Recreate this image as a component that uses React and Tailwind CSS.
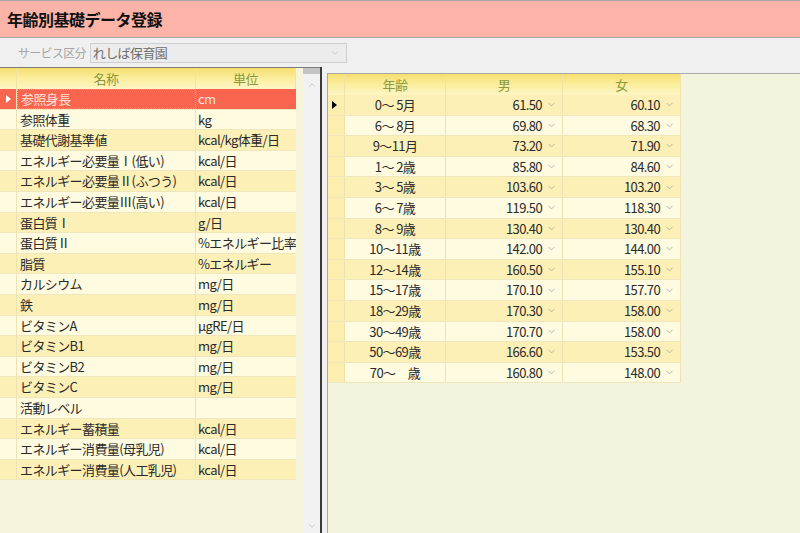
import { ChevronDown, ChevronUp } from 'lucide-react'

const items = [
  ['参照身長', 'cm'],
  ['参照体重', 'kg'],
  ['基礎代謝基準値', 'kcal/kg体重/日'],
  ['エネルギー必要量Ⅰ(低い)', 'kcal/日'],
  ['エネルギー必要量Ⅱ(ふつう)', 'kcal/日'],
  ['エネルギー必要量Ⅲ(高い)', 'kcal/日'],
  ['蛋白質Ⅰ', 'g/日'],
  ['蛋白質Ⅱ', '%エネルギー比率'],
  ['脂質', '%エネルギー'],
  ['カルシウム', 'mg/日'],
  ['鉄', 'mg/日'],
  ['ビタミンA', 'μgRE/日'],
  ['ビタミンB1', 'mg/日'],
  ['ビタミンB2', 'mg/日'],
  ['ビタミンC', 'mg/日'],
  ['活動レベル', ''],
  ['エネルギー蓄積量', 'kcal/日'],
  ['エネルギー消費量(母乳児)', 'kcal/日'],
  ['エネルギー消費量(人工乳児)', 'kcal/日'],
]

const ages = [
  ['0～ 5月', '61.50', '60.10'],
  ['6～ 8月', '69.80', '68.30'],
  ['9～11月', '73.20', '71.90'],
  ['1～ 2歳', '85.80', '84.60'],
  ['3～ 5歳', '103.60', '103.20'],
  ['6～ 7歳', '119.50', '118.30'],
  ['8～ 9歳', '130.40', '130.40'],
  ['10～11歳', '142.00', '144.00'],
  ['12～14歳', '160.50', '155.10'],
  ['15～17歳', '170.10', '157.70'],
  ['18～29歳', '170.30', '158.00'],
  ['30～49歳', '170.70', '158.00'],
  ['50～69歳', '166.60', '153.50'],
  ['70～　歳', '160.80', '148.00'],
]

const font = { fontFamily: '"Noto Sans CJK JP", "Noto Sans", sans-serif' }

function Arrow({ className }) {
  return (
    <svg width="5" height="8" viewBox="0 0 5 8" className={className}>
      <path d="M0 0 L5 4 L0 8 Z" fill="currentColor" />
    </svg>
  )
}

function Head({ children, className = '' }) {
  return (
    <div className={`h-full flex items-center justify-center border-r border-[#efe3a6] bg-gradient-to-b from-[#f6df6e] via-[#fbee9e] to-[#fdf5c4] text-[#8a9a3a] text-[13px] ${className}`}>
      {children}
    </div>
  )
}

function NumCell({ v, w }) {
  return (
    <div className={`${w} h-full flex items-center justify-end gap-[4px] pr-[5px] border-r border-[#ece2b2]`}>
      <span>{v}</span>
      <ChevronDown size={11} strokeWidth={1.6} className="text-[#a0a0a0]" />
    </div>
  )
}

export default function App() {
  return (
    <div className="w-[800px] h-[533px] flex flex-col overflow-hidden bg-[#f0f0f0] text-[#2a2a2a]" style={font}>
      <div className="h-[38px] shrink-0 border-t border-b border-[#a8a8a8] bg-[#fdb4a8] flex items-center pl-[7px]">
        <span className="text-[16px] font-bold tracking-[-0.5px] text-[#111]">年齢別基礎データ登録</span>
      </div>

      <div className="h-[29px] shrink-0 flex items-center pl-[18px] gap-[4px]">
        <span className="text-[12px] tracking-[-0.7px] text-[#a6a6a6]">サービス区分</span>
        <div className="w-[257px] h-[20px] border border-[#cfcfcf] bg-[#ececec] flex items-center justify-between pl-[2px] pr-[6px]">
          <span className="text-[13px] tracking-[-0.6px] text-[#6e6e6e]">れしば保育園</span>
          <ChevronDown size={10} strokeWidth={1.5} className="text-[#b0b0b0]" />
        </div>
      </div>

      <div className="flex-1 flex min-h-0 tracking-[-0.6px]">
        {/* left list */}
        <div className="w-[320px] flex border-t border-[#7a7a7a] bg-[#f6f5dc]">
          <div className="w-[303px] flex flex-col">
            <div className="h-[21px] flex w-[296px]">
              <Head className="w-[17px]" />
              <Head className="w-[179px]">名称</Head>
              <Head className="w-[100px]">単位</Head>
            </div>
            {items.map(([n, u], i) => {
              const sel = i === 0
              const bg = sel ? 'bg-[#f9654f] text-[#ffe2dc]' : i % 2 === 0 ? 'bg-[#fdf0b6]' : 'bg-[#fefbe1]'
              return (
                <div key={n} className={`h-[20.6px] w-[296px] flex text-[13px] whitespace-nowrap border-b border-[#efe6bb] ${bg}`}>
                  <div className="w-[17px] h-full flex items-center justify-center border-r border-[#ece2b2]">
                    {sel && <Arrow className="text-white" />}
                  </div>
                  <div className={`w-[179px] h-full flex items-center pl-[3px] overflow-hidden ${sel ? 'border border-dotted border-[#ffffff66]' : 'border-r border-[#ece2b2]'}`}>{n}</div>
                  <div className="w-[100px] h-full flex items-center pl-[2px] overflow-hidden">{u}</div>
                </div>
              )
            })}
          </div>
          <div className="w-[17px] bg-[#f2f2f2] flex flex-col items-center">
            <div className="w-full h-[6px] bg-[#c4c4c4]" />
            <ChevronUp size={10} strokeWidth={1.5} className="text-[#a8a8a8] mt-[6px]" />
            <div className="flex-1" />
            <ChevronDown size={10} strokeWidth={1.5} className="text-[#a8a8a8] mb-[2px]" />
          </div>
        </div>
        <div className="w-[2px] bg-[#3a3a3a]" />

        {/* right table */}
        <div className="flex-1 pt-[6px] pl-[5px]">
          <div className="h-full border-t border-l border-[#a8a8a8] bg-[#f3f4dd]">
            <div className="h-[21px] flex w-[353px]">
              <Head className="w-[17px]" />
              <Head className="w-[101px]">年齢</Head>
              <Head className="w-[117px]">男</Head>
              <Head className="w-[118px]">女</Head>
            </div>
            {ages.map(([a, m, f], i) => (
              <div key={a} className={`h-[20.6px] w-[353px] flex text-[13px] whitespace-nowrap border-b border-[#efe6bb] ${i % 2 === 0 ? 'bg-[#fdf0b6]' : 'bg-[#fefbe1]'}`}>
                <div className="w-[17px] h-full flex items-center pl-[4px] bg-[#fbeeae] border-r border-[#ece2b2]">
                  {i === 0 && <Arrow className="text-black" />}
                </div>
                <div className="w-[101px] h-full flex items-center justify-center border-r border-[#ece2b2]">{a}</div>
                <NumCell v={m} w="w-[117px]" />
                <NumCell v={f} w="w-[118px]" />
              </div>
            ))}
          </div>
        </div>
      </div>
    </div>
  )
}
